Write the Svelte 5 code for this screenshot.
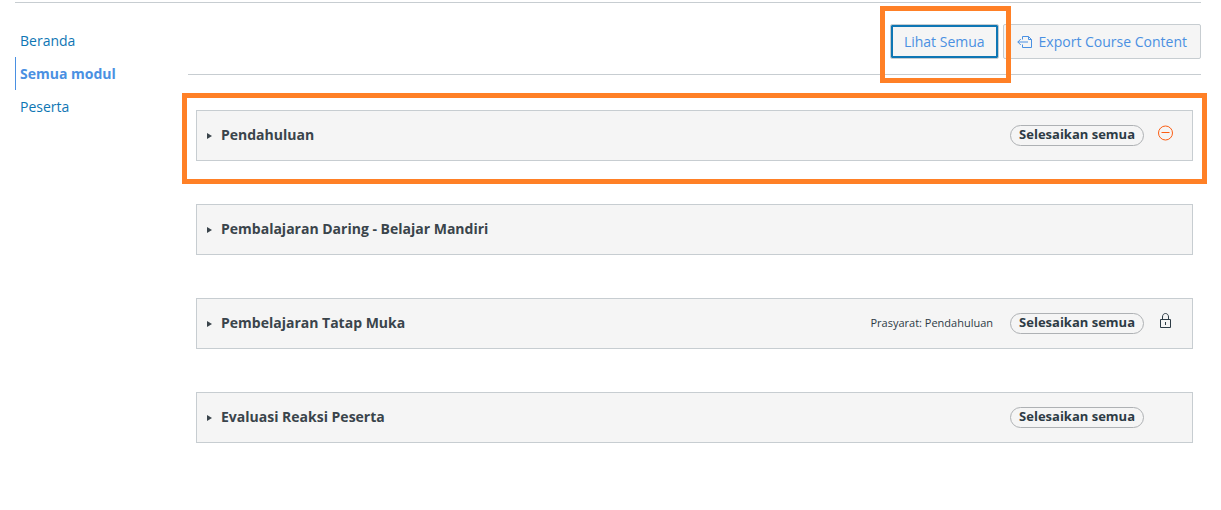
<script>
  const links = [
    { label: 'Beranda' },
    { label: 'Semua modul', active: true },
    { label: 'Peserta' }
  ];
  const modules = [
    { title: 'Pendahuluan', complete: true, status: 'started', marked: true },
    { title: 'Pembalajaran Daring - Belajar Mandiri' },
    { title: 'Pembelajaran Tatap Muka', complete: true, status: 'locked', prerequisite: 'Prasyarat: Pendahuluan' },
    { title: 'Evaluasi Reaksi Peserta', complete: true }
  ];
</script>

<div class="page">
  <nav aria-label="Menu">
    {#each links as link}
      <a href="#top" class:active={link.active}>{link.label}</a>
    {/each}
  </nav>
  <main>
    <div class="toolbar">
      <div class="spot">
        <button class="btn focused">Lihat Semua</button>
      </div>
      <button class="btn">
        <svg width="16" height="14" viewBox="0 0 16 14" fill="none" stroke="currentColor" aria-hidden="true">
          <path d="M5.5 4.5V1.5H11.5L14.5 4.5V12.5H5.5V9.5M11.5 1.5V4.5H14.5M0.8 7H11M3.8 4L0.8 7L3.8 10" />
        </svg>
        Export Course Content
      </button>
    </div>
    <div class="modules">
      {#each modules as item}
        <section class="module" class:marked={item.marked}>
          <button class="toggle" aria-expanded="false">
            <svg width="5" height="8" viewBox="0 0 5 8" aria-hidden="true"><path d="M0 2L5 5L0 8Z" fill="currentColor" /></svg>
            <span>{item.title}</span>
          </button>
          {#if item.prerequisite}<span class="prerequisite">{item.prerequisite}</span>{/if}
          {#if item.complete}<span class="pill">Selesaikan semua</span>{/if}
          <span class="status">
            {#if item.status === 'started'}
              <svg class="started" width="16" height="16" viewBox="0 0 16 16" fill="none" stroke="currentColor" aria-hidden="true">
                <circle cx="7.5" cy="8" r="7" /><path d="M3.5 7.5H11.5" />
              </svg>
            {:else if item.status === 'locked'}
              <svg width="16" height="16" viewBox="0 0 16 16" fill="none" stroke="currentColor" aria-hidden="true">
                <path d="M2.5 6.5H12.5V14.5H2.5ZM4.5 6.5V4C4.5 1.8 5.8 0.5 7.5 0.5S10.5 1.8 10.5 4V6.5M7.5 9V12" />
              </svg>
            {/if}
          </span>
        </section>
      {/each}
    </div>
  </main>
</div>

<style>
  :global(body) {
    background: #fff;
    font-family: "Open Sans", "Noto Sans", sans-serif;
    font-size: 14px;
    color: #2d3b45;
  }
  .page {
    display: flex;
    margin: 2px 20px 0 15px;
    border-top: 1px solid #c7cdd1;
  }
  nav {
    display: flex;
    flex-direction: column;
    flex: 0 0 173px;
    padding-top: 21px;
  }
  nav a {
    align-self: flex-start;
    padding-left: 4px;
    border-left: 1px solid transparent;
    line-height: 33px;
    color: #0e76b4;
    text-decoration: none;
  }
  nav a.active {
    border-color: #4a90e2;
    color: #4a90e2;
    font-weight: 700;
  }
  main {
    flex: 1;
    min-width: 0;
  }
  .toolbar {
    display: flex;
    justify-content: flex-end;
    align-items: center;
    gap: 4px;
    height: 77px;
    box-sizing: border-box;
    background: linear-gradient(#c7cdd1, #c7cdd1) 0 71px / 100% 1px no-repeat;
  }
  .btn {
    display: flex;
    align-items: center;
    gap: 6px;
    height: 35px;
    padding: 0 13px;
    border: 1px solid #c7cdd1;
    border-radius: 2px;
    background: #f5f5f5;
    color: #4a90e2;
    font: inherit;
    white-space: nowrap;
  }
  .spot {
    position: relative;
    z-index: 1;
  }
  .focused {
    box-shadow: inset 0 0 0 2px #0e76b4;
  }
  .spot::after {
    content: "";
    position: absolute;
    inset: -18px -12px -24px -10px;
    border: 5px solid #ff8026;
    pointer-events: none;
  }
  .modules {
    display: flex;
    flex-direction: column;
    gap: 43px;
    padding: 30px 8px 0;
  }
  .module {
    position: relative;
    display: flex;
    align-items: center;
    height: 51px;
    box-sizing: border-box;
    padding: 0 18px 0 10px;
    border: 1px solid #c7cdd1;
    background: #f5f5f5;
  }
  .marked::after {
    content: "";
    position: absolute;
    inset: -18px -15px -24px;
    border: 5px solid #ff8026;
    pointer-events: none;
  }
  .toggle {
    display: flex;
    align-items: center;
    gap: 9px;
    margin-right: auto;
    padding: 0 0 2px;
    border: 0;
    background: none;
    color: #3a444b;
    font: inherit;
    font-weight: 700;
  }
  .prerequisite {
    margin-right: 17px;
    padding-bottom: 2px;
    font-size: 11px;
  }
  .pill {
    padding: 0 8px 2px;
    border: 1px solid #aeb1b4;
    border-radius: 12px;
    font-size: 13px;
    font-weight: 700;
    line-height: 17px;
  }
  .status {
    display: flex;
    width: 16px;
    margin-left: 14px;
    padding-bottom: 5px;
  }
  .started {
    color: #fc5e13;
  }
</style>
